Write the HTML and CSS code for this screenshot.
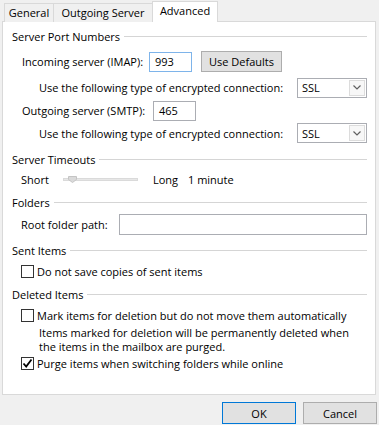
FILE: index.html
```html
<!DOCTYPE html>
<html lang="en">
<head>
  <meta charset="UTF-8">
  <title>Advanced</title>
  <link rel="stylesheet" href="styles.css">
</head>
<body>
  <div class="tabs">
    <div class="tab tab-general">General</div>
    <div class="tab tab-outgoing">Outgoing Server</div>
    <div class="tab tab-active">Advanced</div>
  </div>

  <div class="panel">
    <div class="group-title"><span>Server Port Numbers</span></div>
    <div class="row row-imap">
      <label class="label-imap">Incoming server (IMAP):</label>
      <div class="textbox textbox-port textbox-focus">993</div>
      <button class="btn btn-defaults">Use Defaults</button>
    </div>
    <div class="row row-enc">
      <label>Use the following type of encrypted connection:</label>
      <div class="select">
        <span>SSL</span>
        <span class="select-arrow">
          <svg width="8" height="5" viewBox="0 0 8 5"><polyline points="0.5,0.5 4,4 7.5,0.5" fill="none" stroke="#606060" stroke-width="1.2"/></svg>
        </span>
      </div>
    </div>
    <div class="row row-smtp">
      <label class="label-smtp">Outgoing server (SMTP):</label>
      <div class="textbox textbox-port">465</div>
    </div>
    <div class="row row-enc row-enc2">
      <label>Use the following type of encrypted connection:</label>
      <div class="select">
        <span>SSL</span>
        <span class="select-arrow">
          <svg width="8" height="5" viewBox="0 0 8 5"><polyline points="0.5,0.5 4,4 7.5,0.5" fill="none" stroke="#606060" stroke-width="1.2"/></svg>
        </span>
      </div>
    </div>

    <div class="group-title group-timeouts"><span>Server Timeouts</span></div>
    <div class="row row-slider">
      <span class="label-short">Short</span>
      <div class="slider">
        <div class="slider-track"></div>
        <svg class="slider-thumb" width="9" height="7" viewBox="0 0 9 7"><polygon points="0.5,0.5 8.5,0.5 8.5,3.5 4.5,6.5 0.5,3.5" fill="#dadada" stroke="#c4c4c4"/></svg>
      </div>
      <span class="label-long">Long</span>
      <span>1 minute</span>
    </div>

    <div class="group-title group-folders"><span>Folders</span></div>
    <div class="row row-root">
      <label class="label-root">Root folder path:</label>
      <div class="textbox textbox-wide"></div>
    </div>

    <div class="group-title group-sent"><span>Sent Items</span></div>
    <div class="row row-check row-sent">
      <span class="checkbox"></span>
      <span>Do not save copies of sent items</span>
    </div>

    <div class="group-title group-deleted"><span>Deleted Items</span></div>
    <div class="row row-check row-mark">
      <span class="checkbox"></span>
      <span>Mark items for deletion but do not move them automatically</span>
    </div>
    <div class="note">
      Items marked for deletion will be permanently deleted when<br>
      the items in the mailbox are purged.
    </div>
    <div class="row row-check row-purge">
      <span class="checkbox">
        <svg width="11" height="11" viewBox="0 0 11 11"><polyline points="1.5,5.5 4.2,8.5 9.5,1.5" fill="none" stroke="#000" stroke-width="1.8"/></svg>
      </span>
      <span>Purge items when switching folders while online</span>
    </div>
  </div>

  <div class="actions">
    <button class="btn btn-dialog btn-default">OK</button>
    <button class="btn btn-dialog">Cancel</button>
  </div>
</body>
</html>
```

FILE: styles.css
```css
* {
  box-sizing: border-box;
}
body {
  margin: 0;
  width: 379px;
  height: 425px;
  overflow: hidden;
  background-color: #f0f0f0;
  font-family: "Open Sans", "Noto Sans", sans-serif;
  font-size: 11px;
  color: #000;
}

/* tab strip */
.tabs {
  display: flex;
  align-items: flex-end;
  height: 22px;
  padding-left: 4px;
}
.tab {
  height: 19px;
  border: 1px solid #d9d9d9;
  border-bottom: none;
  background-color: #f0f0f0;
  text-align: center;
  line-height: 18px;
  white-space: nowrap;
}
.tab-general {
  width: 50px;
}
.tab-outgoing {
  width: 100px;
  margin-left: -1px;
}
.tab-active {
  position: relative;
  z-index: 1;
  width: 66px;
  height: 21px;
  margin-left: -1px;
  background-color: #fff;
  line-height: 17px;
}

/* main page */
.panel {
  width: 374px;
  height: 374px;
  margin: -1px 0 0 2px;
  padding: 6px 8px 0 9px;
  background-color: #fff;
  border: 1px solid #d9d9d9;
}
.group-title {
  display: flex;
  align-items: center;
  height: 16px;
  white-space: nowrap;
}
.group-title::after {
  content: "";
  flex: 1;
  height: 1px;
  margin-left: 4px;
  background-color: #d5d5d5;
}
.group-timeouts {
  margin-top: 8px;
}
.group-folders {
  margin-top: 6px;
}
.group-sent,
.group-deleted {
  margin-top: 7px;
}

.row {
  display: flex;
  align-items: center;
  white-space: nowrap;
}
.row-imap {
  height: 21px;
  margin-top: 7px;
  padding-left: 10px;
}
.label-imap {
  width: 127px;
}
.row-smtp {
  height: 21px;
  margin-top: 2px;
  padding-left: 10px;
}
.label-smtp {
  width: 131px;
}
.row-enc {
  justify-content: space-between;
  height: 21px;
  margin-top: 5px;
  padding-left: 27px;
}
.row-enc2 {
  height: 20px;
  margin-top: 2px;
}

/* controls */
.textbox {
  height: 20px;
  border: 1px solid #abadb3;
  background-color: #fff;
  padding: 0 5px;
  line-height: 18px;
}
.textbox-port {
  width: 43px;
}
.textbox-focus {
  border-color: #7eb4ea;
}
.textbox-wide {
  flex: 1;
  height: 21px;
}
.btn {
  font-family: inherit;
  font-size: 11px;
  color: #000;
  background-color: #e1e1e1;
  border: 1px solid #adadad;
  padding: 0;
  cursor: pointer;
}
.btn-defaults {
  width: 81px;
  height: 21px;
  margin-left: 9px;
}
.select {
  display: flex;
  align-items: center;
  justify-content: space-between;
  width: 70px;
  height: 20px;
  padding: 1px 1px 1px 4px;
  border: 1px solid #abadb3;
  background-color: #fff;
}
.select-arrow {
  display: flex;
  align-items: center;
  justify-content: center;
  width: 16px;
  height: 16px;
  border: 1px solid #dcdcdc;
  background-color: #f7f7f7;
}

/* timeout slider */
.row-slider {
  height: 17px;
  margin-top: 4px;
  padding-left: 9px;
}
.label-short {
  width: 42px;
}
.slider {
  position: relative;
  width: 75px;
  height: 17px;
  display: flex;
  align-items: center;
}
.slider-track {
  width: 100%;
  height: 3px;
  background-color: #e7e7e7;
  border: 1px solid #dadada;
}
.slider-thumb {
  position: absolute;
  left: 5px;
  top: 5px;
}
.label-long {
  width: 35px;
  margin-left: 15px;
}

.row-root {
  height: 21px;
  margin-top: 4px;
  padding-left: 9px;
}
.label-root {
  width: 98px;
}

/* checkboxes */
.row-check {
  height: 16px;
  margin-top: 5px;
  padding-left: 9px;
}
.row-purge {
  margin-top: 1px;
}
.checkbox {
  display: flex;
  align-items: center;
  justify-content: center;
  width: 13px;
  height: 13px;
  margin-right: 3px;
  border: 1px solid #333;
  background-color: #fff;
}
.note {
  margin-top: 3px;
  padding-left: 27px;
  line-height: 14px;
}

/* dialog buttons */
.actions {
  display: flex;
  justify-content: flex-end;
  gap: 7px;
  margin-top: 7px;
  padding-right: 2px;
}
.btn-dialog {
  width: 74px;
  height: 22px;
}
.btn-default {
  border-color: #0078d7;
}
```
